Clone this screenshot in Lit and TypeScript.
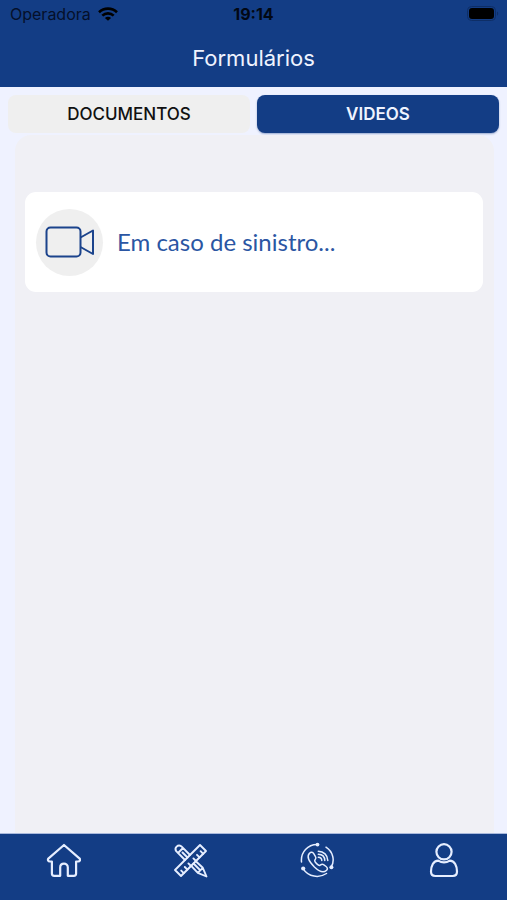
import { LitElement, html, css, svg } from "lit";
import { customElement, state } from "lit/decorators.js";

const wifi = html`<svg class="wifi" viewBox="0 0 20 14" aria-hidden="true">
  <g fill="none" stroke="currentColor" stroke-width="2.6">
    <path d="M1 5.2C6 .4 14 .4 19 5.2" />
    <path d="M4.3 8.6c3.2-3 8.2-3 11.4 0" />
  </g>
  <path fill="currentColor" d="M10 13.8 6.9 10.9c1.8-1.5 4.4-1.5 6.2 0z" />
</svg>`;

const battery = html`<svg class="battery" viewBox="0 0 32 16" aria-hidden="true">
  <rect x="0.5" y="0.5" width="28" height="14" rx="4" fill="none" stroke="#0e2e66" />
  <rect x="2" y="2" width="25" height="11" rx="3" fill="#000" />
  <path d="M30 5.5c1.6.6 1.6 3.6 0 4.2z" fill="#0e2e66" />
</svg>`;

const camera = html`<svg class="camera" viewBox="0 0 50 32" aria-hidden="true">
  <g fill="none" stroke="currentColor" stroke-width="2" stroke-linejoin="round">
    <rect x="1.5" y="1.5" width="34" height="29" rx="4" />
    <path d="M35.5 11.5 48 4.500v23.500l-12.500-7" />
  </g>
</svg>`;

const icons = {
  home: svg`<path d="M19 3 3.600 16.300c-1.400 1.500-.4 3.200 1.300 3.200h2v12c0 1.500.8 2.300 2.300 2.300h6V25.200c0-4.800 7.600-4.800 7.600 0v8.600h6c1.500 0 2.300-.8 2.300-2.300v-12h2c1.700 0 2.700-1.700 1.300-3.200z" stroke-width="2.200" />`,
  tools: svg`<g stroke-width="1.900">
    <path d="M13 18 4.200 9.200A3.600 3.600 0 0 1 9.200 4.200L18 13M6 11 11 6M10.500 10.500l5 5" />
    <path d="M28 3 34 9 9 34 3 28z" />
    <path d="M31.200 11.800l-2.600-2.600M27.600 15.400l-2.600-2.600M24 19l-2.600-2.600M19 24l-2.600-2.600M15.400 27.600l-2.600-2.600M11.800 31.200l-2.600-2.600" />
    <path d="M19.200 23.800 25.800 30.800 34.500 34.500 30.800 25.800 23.800 19.200M25.800 30.800l5-5M21.500 21.500l6 6" />
  </g>`,
  phone: svg`<g stroke-width="1.500">
    <path d="M2.500 20C1.500 10 9 2.600 18 2.600M27 5.200c7 4.500 9 13 5.400 19.500M27.500 31.500C20 36.500 9.500 35 4.200 26.800" />
    <path d="M10.500 11.300c1.600-1.600 3.200-1.200 4.200.4l1.800 3c1.300 2-.2 2.700-.8 3.600-.4 1.700 3.600 5.400 5.200 5.100 1-.5 1.800-2 3.600-.7l2.600 1.800c1.600 1.200 1.700 2.800.2 4-3.200 2.900-7.700.5-11.900-3.500-4.300-4.300-8.400-10-4.900-13.700z" />
    <path d="M19.300 15.200c2 0 3.400 1.300 3.500 3.300M19.300 12.200c3.800.1 6.400 2.600 6.500 6.300M19.300 9.200c5.400.1 9.400 4 9.500 9.300" />
  </g>
  <g fill="currentColor" stroke="none"><circle cx="18.5" cy="2.600" r="1.900" /><circle cx="32.4" cy="25.2" r="2" /><circle cx="4.2" cy="26.5" r="2.100" /></g>`,
  user: svg`<g stroke-width="2.200"><circle cx="18" cy="9.800" r="7.600" />
    <path d="M12.200 18.600C7.400 18.600 5 24 5 29.600c0 3 1.300 4.400 4.200 4.400h17.600c2.900 0 4.200-1.400 4.200-4.400 0-5.600-2.400-11-7.200-11-3.600 2.300-8 2.300-11.600 0z" /></g>`,
};

const navItems = [
  { label: "Início", icon: icons.home },
  { label: "Ferramentas", icon: icons.tools },
  { label: "Contato", icon: icons.phone },
  { label: "Perfil", icon: icons.user },
];

@customElement("app-root")
export class AppRoot extends LitElement {
  @state() private tab = "VIDEOS";

  static styles = css`
    :host {
      display: flex;
      flex-direction: column;
      min-height: 100vh;
      background: #eff2ff;
      font-family: Inter, "Liberation Sans", sans-serif;
      color: #000;
    }
    * { box-sizing: border-box; }
    svg { display: block; }
    .header { background: #133d85; height: 87px; }
    .status {
      display: grid;
      grid-template-columns: 1fr auto 1fr;
      align-items: center;
      height: 28px;
      padding: 0 8px;
      font-size: 16px;
      line-height: 28px;
      color: #05102a;
    }
    .carrier { display: flex; align-items: center; gap: 7px; padding-left: 2px; }
    .wifi { width: 20px; height: 14px; color: #000; }
    .time { font-weight: 700; color: #020814; }
    .battery { width: 32px; height: 16px; justify-self: end; }
    .title {
      margin: 0;
      text-align: center;
      font-size: 22px;
      line-height: 60px;
      font-weight: 400;
      color: #eff3ff;
    }
    .tabs {
      display: grid;
      grid-template-columns: 1fr 1fr;
      gap: 7px;
      padding: 8px 8px 0;
    }
    .tab {
      height: 38px;
      padding: 0;
      border: 0;
      border-radius: 8px;
      background: #efefef;
      color: #111;
      font: 500 17px Inter, "Liberation Sans", sans-serif;
      cursor: pointer;
    }
    .tab.active {
      background: #133d85;
      color: #eff3ff;
      font-weight: 600;
      box-shadow: 0 1px 2px #133d8566;
    }
    .panel {
      flex: 1;
      margin: 2px 13px 0 15px;
      padding: 57px 11px 16px 10px;
      border-radius: 16px 16px 0 0;
      background: #f0f0f5;
    }
    .card {
      display: flex;
      align-items: center;
      gap: 14px;
      min-height: 100px;
      padding: 0 11px;
      border-radius: 11px;
      background: #fff;
      color: #2b56a3;
      font: 400 24px/32px Lato, "Liberation Sans", sans-serif;
      text-decoration: none;
    }
    .disc {
      display: grid;
      place-items: center;
      width: 67px;
      height: 67px;
      border-radius: 50%;
      background: #efefef;
      color: #1b438c;
    }
    .camera { width: 50px; height: 32px; }
    .nav {
      display: grid;
      grid-template-columns: repeat(4, 1fr);
      height: 67px;
      border-top: 1px solid #a9b9dc;
      background: #133d85;
    }
    .nav-item {
      display: flex;
      justify-content: center;
      padding: 8px 0 0;
      border: 0;
      background: none;
      color: #e6eeff;
      cursor: pointer;
    }
    .nav-icon {
      width: 36px;
      height: 36px;
      fill: none;
      stroke: currentColor;
      stroke-linejoin: round;
      stroke-linecap: round;
    }
  `;

  render() {
    return html`
      <header class="header">
        <div class="status">
          <span class="carrier">Operadora ${wifi}</span>
          <span class="time">19:14</span>
          ${battery}
        </div>
        <h1 class="title">Formulários</h1>
      </header>
      <div class="tabs" role="tablist">
        ${["DOCUMENTOS", "VIDEOS"].map(
          (name) => html`<button
            class="tab ${this.tab === name ? "active" : ""}"
            role="tab"
            aria-selected=${this.tab === name ? "true" : "false"}
            @click=${() => (this.tab = name)}
          >${name}</button>`,
        )}
      </div>
      <main class="panel">
        <a class="card" href="#sinistro">
          <span class="disc">${camera}</span>
          <span>Em caso de sinistro...</span>
        </a>
      </main>
      <nav class="nav">
        ${navItems.map(
          (item) => html`<button class="nav-item" aria-label=${item.label}>
            <svg class="nav-icon" viewBox="0 0 36 36" aria-hidden="true">${item.icon}</svg>
          </button>`,
        )}
      </nav>
    `;
  }
}
